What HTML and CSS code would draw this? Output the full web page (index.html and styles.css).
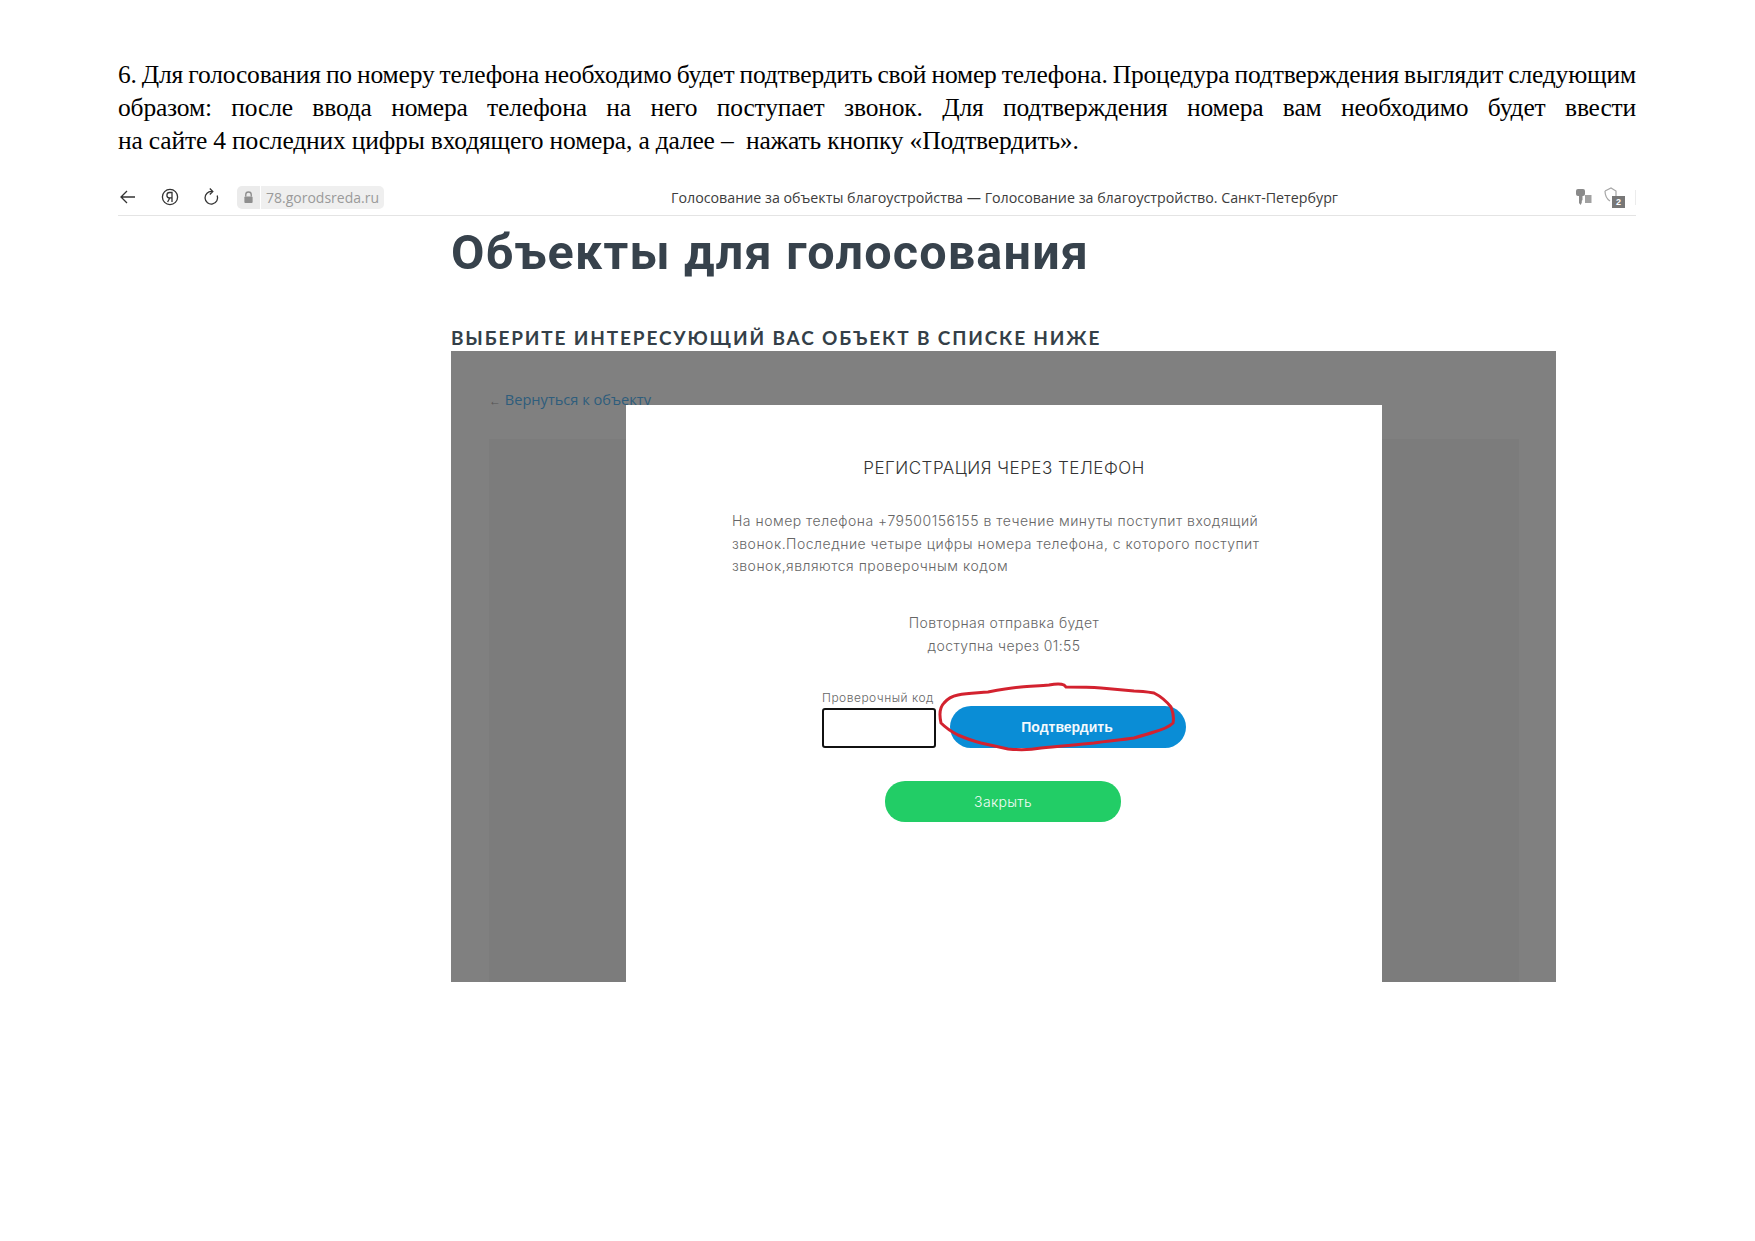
FILE: index.html
```html
<!DOCTYPE html>
<html lang="ru">
<head>
<meta charset="utf-8">
<title>Голосование</title>
<link rel="stylesheet" href="styles.css">
</head>
<body>
<main class="page">
  <p class="intro">
    <span class="intro-line intro-tight">6. Для голосования по номеру телефона необходимо будет подтвердить свой номер телефона. Процедура подтверждения выглядит следующим</span>
    <span class="intro-line">образом: после ввода номера телефона на него поступает звонок. Для подтверждения номера вам необходимо будет ввести</span>
    <span class="intro-end">на сайте 4 последних цифры входящего номера, а далее –&nbsp; нажать кнопку «Подтвердить».</span>
  </p>

  <header class="browser-bar">
    <svg class="icon back" viewBox="0 0 20 20"><path d="M17 10H3M9 4l-6 6 6 6"/></svg>
    <svg class="icon ya" viewBox="0 0 20 20"><circle cx="10" cy="10" r="7.600"/><path d="M12 15V5.500H9.600a2.600 2.600 0 0 0 0 5.400H12M9.800 11L7.600 15"/></svg>
    <svg class="icon reload" viewBox="0 0 20 20"><path d="M11 4.500a6.300 6.300 0 1 0 5.200 4M8.800 1.500l3 3-3 3"/></svg>
    <span class="lock-chip"><svg class="lock" viewBox="0 0 12 14"><path d="M3 6V4a3 3 0 0 1 6 0v2" class="lock-loop"/><rect x="1.500" y="6" width="9" height="7" rx="1"/></svg></span>
    <span class="url-chip">78.gorodsreda.ru</span>
    <span class="bar-title">Голосование за объекты благоустройства — Голосование за благоустройство. Санкт-Петербург</span>
    <svg class="key" viewBox="0 0 18 18"><rect x="1" y="1" width="9" height="7" rx="2"/><path d="M4 7h3.500v5l-.7.800v1.700L5.700 17 4 15z"/><path d="M10 7h6.500v8H10z" opacity=".8"/></svg>
    <span class="shield-wrap">
      <svg class="shield" viewBox="0 0 22 22"><path d="M2 5l6-3 5 3v5M2 5c0 5 2 8 5 10"/></svg>
      <span class="shield-badge">2</span>
    </span>
    <span class="bar-sep"></span>
  </header>

  <section class="site">
    <h1 class="site-title">Объекты для голосования</h1>
    <h2 class="site-sub">ВЫБЕРИТЕ ИНТЕРЕСУЮЩИЙ ВАС ОБЪЕКТ В СПИСКЕ НИЖЕ</h2>

    <div class="stage">
      <a class="back-link"><span class="back-arrow">←</span> Вернуться к объекту</a>
      <div class="stage-panel"></div>

      <div class="modal">
        <h3 class="modal-title">РЕГИСТРАЦИЯ ЧЕРЕЗ ТЕЛЕФОН</h3>
        <p class="modal-text">На номер телефона +79500156155 в течение минуты поступит входящий<br>звонок.Последние четыре цифры номера телефона, с которого поступит<br>звонок,являются проверочным кодом</p>
        <p class="modal-timer">Повторная отправка будет<br>доступна через 01:55</p>
        <div class="code-row">
          <label class="code-field">
            <span class="code-label">Проверочный код</span>
            <span class="code-input"></span>
          </label>
          <span class="btn-confirm">Подтвердить</span>
        </div>
        <span class="btn-close">Закрыть</span>
        <svg class="scribble" viewBox="0 0 240 75"><path d="M5 43C3 34 4 27 8 23C12 18 17 16 22 15C32 13 42 13 52 12C63 10 74 8 85 7C95 6 104 6 113 5C118 4 124 3 128 5L130 7C142 7 153 7 165 8C176 9 187 10 198 11C205 11 212 12 218 13C226 17 231 22 235 27C237 32 238 38 237 43C232 48 225 50 218 52C212 54 205 56 198 58C185 60 171 61 158 63C140 65 122 66 105 68C94 70 83 70 72 69C63 67 54 65 45 63C37 61 29 58 22 55C16 52 10 48 5 43Z"/></svg>
      </div>
    </div>
  </section>
</main>
</body>
</html>
```
FILE: styles.css
```css
* { box-sizing: border-box; }
html, body { margin: 0; background: #fff; }
body { width: 1755px; height: 1241px; overflow: hidden; }

.page { padding: 58px 119px 0 118px; }

.intro {
  margin: 0 0 22px;
  font: 25.5px/33px "Liberation Serif", serif;
  letter-spacing: -0.17px;
  color: #000;
}
.intro-line { display: block; text-align: justify; text-align-last: justify; }
.intro-tight { word-spacing: -4px; white-space: nowrap; }
.intro-end { display: block; }

.browser-bar {
  display: flex;
  align-items: center;
  height: 37px;
  border-bottom: 1px solid #e4e4e4;
  font-family: "Open Sans", sans-serif;
}
.icon { width: 20px; height: 20px; fill: none; stroke: #333; stroke-width: 1.3; }
.ya { margin-left: 22px; }
.reload { margin-left: 21px; }
.lock-chip {
  display: flex; align-items: center; justify-content: center;
  width: 23px; height: 23px; margin-left: 16px;
  background: #ebebeb; border-radius: 5px 0 0 5px;
}
.lock { width: 11px; height: 13px; fill: #8f8f8f; }
.lock-loop { fill: none; stroke: #8f8f8f; stroke-width: 1.5; }
.url-chip {
  margin-left: 1px; padding: 0 5px; height: 23px; line-height: 23px;
  font-size: 14px; color: #9a9a9a; background: #efefef; border-radius: 0 5px 5px 0;
  white-space: nowrap;
}
.bar-title { margin-left: 287px; font-size: 14.25px; color: #3c3c3c; white-space: nowrap; }
.key { width: 18px; height: 18px; margin-left: auto; fill: #8a8a8a; }
.shield-wrap { position: relative; width: 22px; height: 22px; margin-left: 10px; }
.shield { width: 22px; height: 22px; fill: none; stroke: #a5a5a5; stroke-width: 1.2; }
.shield-badge {
  position: absolute; right: 0; bottom: 0; width: 13px; height: 12px;
  background: #777; color: #fff; font: bold 9px/12px "Liberation Sans", sans-serif; text-align: center;
}
.bar-sep { width: 1px; height: 15px; margin-left: 10px; background: #ececec; }

.site { padding-left: 333px; padding-right: 80px; }
.site-title {
  margin: 12px 0 0;
  font: 700 48.5px/50px Roboto, sans-serif;
  letter-spacing: 1.2px;
  color: #37424c;
}
.site-sub {
  margin: 47px 0 0;
  font: 700 19px/26px Lato, sans-serif;
  letter-spacing: 1.85px;
  color: #343f48;
}
.stage {
  position: relative;
  height: 631px;
  background: #808080;
  padding: 35px 37px 0 38px;
  overflow: hidden;
}
.back-link {
  display: block; height: 53px;
  font: 400 14.6px/26px "Open Sans", sans-serif;
  color: #2e5d7c;
}
.back-arrow { color: #555; font-size: 12px; }
.stage-panel { height: 100%; background: #7c7c7c; }

.modal {
  position: absolute; left: 175px; top: 54px; bottom: 0; width: 756px;
  background: #fff;
  display: flex; flex-direction: column; align-items: center;
  color: #666;
}
.modal-title {
  margin: 51px 0 0;
  font: 300 17px/24px Inter, sans-serif;
  letter-spacing: 0.5px;
  color: #333;
}
.modal-text {
  align-self: flex-start;
  margin: 30px 0 0 106px;
  font: 300 14px/22.7px Inter, sans-serif;
  letter-spacing: 0.5px;
  white-space: nowrap;
}
.modal-timer {
  margin: 34px 0 0;
  font: 300 14px/22.7px Inter, sans-serif;
  letter-spacing: 0.4px;
  text-align: center;
}
.code-row {
  align-self: flex-start;
  display: flex; align-items: flex-end;
  margin: 32px 0 0 196px;
}
.code-field { display: flex; flex-direction: column; width: 114px; }
.code-label { font: 300 12px/16px Inter, sans-serif; letter-spacing: 0.5px; color: #666; white-space: nowrap; margin-bottom: 2px; }
.code-input { height: 40px; background: #fff; border: 2px solid #111; border-radius: 3px; }
.btn-confirm {
  display: block; width: 236px; height: 42px; margin-left: 14px;
  background: #0a8dd6; border-radius: 21px;
  color: #f4f9fc; font: 700 14px/42px "Liberation Sans", sans-serif; text-indent: -2px; text-align: center;
}
.btn-close {
  display: block; width: 236px; height: 41px; margin-top: 33px; margin-right: 2px;
  background: #22cd66; border-radius: 20px;
  color: #f3fbf6; font: 300 14px/41px Inter, sans-serif; letter-spacing: 0.3px; text-align: center;
}
.scribble {
  position: absolute; left: 310px; top: 275px; width: 240px; height: 75px;
  fill: none; stroke: #d3222f; stroke-width: 3;
}
```
